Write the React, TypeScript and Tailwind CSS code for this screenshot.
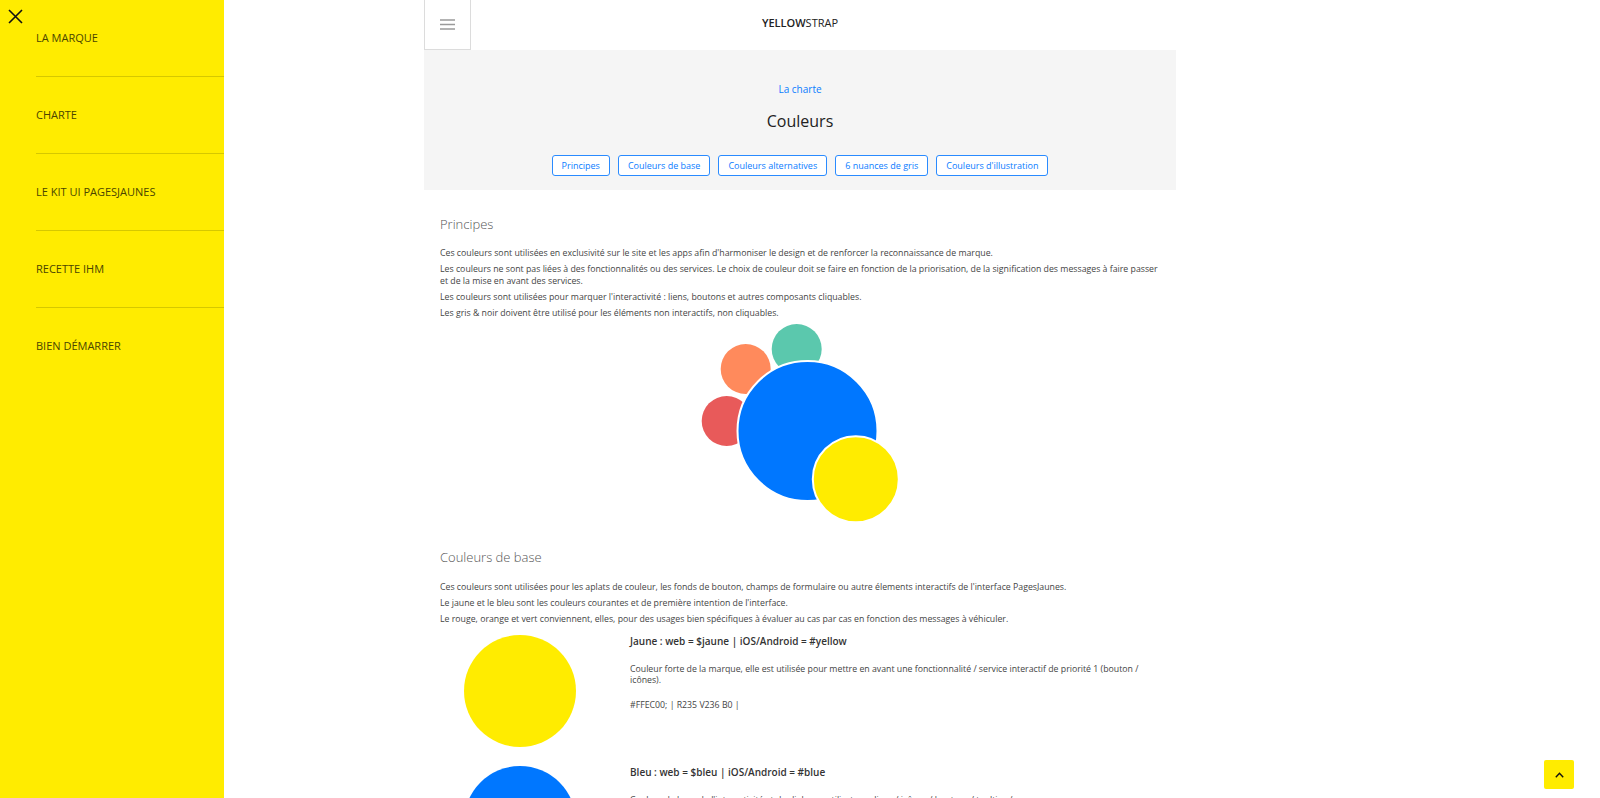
import React from 'react';

const menu = ['LA MARQUE', 'CHARTE', 'LE KIT UI PAGESJAUNES', 'RECETTE IHM', 'BIEN DÉMARRER'];

const anchors = ['Principes', 'Couleurs de base', 'Couleurs alternatives', '6 nuances de gris', "Couleurs d'illustration"];

const baseColors = [
    {
        fill: 'bg-[#ffec00]',
        title: 'Jaune : web = $jaune | iOS/Android = #yellow',
        desc: 'Couleur forte de la marque, elle est utilisée pour mettre en avant une fonctionnalité / service interactif de priorité 1 (bouton / icônes).',
        code: '#FFEC00; | R235 V236 B0 |',
    },
    {
        fill: 'bg-[#0077ff]',
        title: 'Bleu : web = $bleu | iOS/Android = #blue',
        desc: "Couleur de base de l'interactivité et du dialogue utilisateur : liens / icônes / boutons / tooltips /",
        code: '#0077FF; | R0 V119 B255 |',
    },
    {
        fill: 'bg-[#e85a5a]',
        title: 'Rouge : web = $rouge | iOS/Android = #red',
        desc: "Utilisée pour les messages d'erreur et les alertes.",
        code: '#E85A5A; | R232 V90 B90 |',
    },
];

const Sidebar = () => (
    <aside className="fixed left-0 top-0 h-screen w-[224px] bg-[#ffec00]">
        <button className="absolute left-[8px] top-[9px] h-[15px] w-[15px]">
            <svg viewBox="0 0 15 15" className="h-[15px] w-[15px]">
                <path d="M1 1 L14 14 M14 1 L1 14" stroke="#111" strokeWidth="1.6" fill="none" />
            </svg>
        </button>
        <nav className="pl-[36px]">
            {menu.map((item, i) => (
                <div
                    key={item}
                    className={`flex h-[77px] items-center text-[11px] text-[#4a4500] ${i < menu.length - 1 ? 'border-b border-[#d6c800]' : ''}`}
                >
                    {item}
                </div>
            ))}
        </nav>
    </aside>
);

const Bubbles = () => (
    <div className="flex justify-center">
        <svg width="240" height="206" viewBox="0 0 240 206">
            <circle cx="116.7" cy="29" r="25" fill="#5bc8ad" />
            <circle cx="65.7" cy="49" r="25" fill="#ff8a5c" />
            <circle cx="46.7" cy="101" r="25" fill="#e85a5a" />
            <circle cx="127.5" cy="111" r="70" fill="#0077ff" stroke="#fff" strokeWidth="2" />
            <circle cx="175.8" cy="159.2" r="43" fill="#ffec00" stroke="#fff" strokeWidth="2" />
        </svg>
    </div>
);

export default function App() {
    return (
        <div className="min-h-screen bg-white font-['Open_Sans',sans-serif] text-[#333]">
            <Sidebar />

            <div className="mx-auto w-[752px]">
                <header className="grid h-[50px] grid-cols-[47px_1fr_47px] items-start">
                    <button className="flex h-[50px] w-[47px] items-center justify-center border-x border-b border-[#dcdcdc] bg-white">
                        <svg width="15" height="11" viewBox="0 0 15 11">
                            <path d="M0 1 H15 M0 5.5 H15 M0 10 H15" stroke="#9a9a9a" strokeWidth="1.3" />
                        </svg>
                    </button>
                    <div className="flex h-[46px] items-center justify-center text-[11px] text-[#222]">
                        <span className="font-semibold">YELLOW</span>
                        <span>STRAP</span>
                    </div>
                    <div />
                </header>

                <div className="flex h-[140px] flex-col items-center bg-[#f5f5f5] pt-[32px]">
                    <a className="text-[10px] leading-[14px] text-[#0a7cff]">La charte</a>
                    <h1 className="mt-[14px] text-[16px] leading-[22px] text-[#222]">Couleurs</h1>
                    <div className="mt-[23px] flex gap-[8px]">
                        {anchors.map((a) => (
                            <a
                                key={a}
                                className="flex h-[21px] items-center rounded-[3px] border border-[#2a8bff] bg-white px-[9px] text-[9px] text-[#0a7cff]"
                            >
                                {a}
                            </a>
                        ))}
                    </div>
                </div>

                <main className="px-[16px]">
                    <section className="pt-[25px]">
                        <h2 className="text-[13px] font-light leading-[18px] text-[#555]">Principes</h2>
                        <div className="mt-[15px] space-y-[5.2px] text-[8.75px] leading-[11.2px] text-[#444]">
                            <p>Ces couleurs sont utilisées en exclusivité sur le site et les apps afin d'harmoniser le design et de renforcer la reconnaissance de marque.</p>
                            <p>Les couleurs ne sont pas liées à des fonctionnalités ou des services. Le choix de couleur doit se faire en fonction de la priorisation, de la signification des messages à faire passer et de la mise en avant des services.</p>
                            <p>Les couleurs sont utilisées pour marquer l'interactivité : liens, boutons et autres composants cliquables.</p>
                            <p>Les gris &amp; noir doivent être utilisé pour les éléments non interactifs, non cliquables.</p>
                        </div>
                        <Bubbles />
                    </section>

                    <section className="pt-[22px]">
                        <h2 className="text-[13px] font-light leading-[18px] text-[#555]">Couleurs de base</h2>
                        <div className="mt-[16px] space-y-[5.2px] text-[8.75px] leading-[11.2px] text-[#444]">
                            <p>Ces couleurs sont utilisées pour les aplats de couleur, les fonds de bouton, champs de formulaire ou autre élements interactifs de l'interface PagesJaunes.</p>
                            <p>Le jaune et le bleu sont les couleurs courantes et de première intention de l'interface.</p>
                            <p>Le rouge, orange et vert conviennent, elles, pour des usages bien spécifiques à évaluer au cas par cas en fonction des messages à véhiculer.</p>
                        </div>

                        <div className="mt-[8px] flex flex-col gap-[18px]">
                            {baseColors.map((c) => (
                                <div key={c.title} className="flex items-start">
                                    <div className="flex w-[160px] shrink-0 justify-center pt-[1px]">
                                        <div className={`h-[112px] w-[112px] rounded-full ${c.fill}`} />
                                    </div>
                                    <div className="ml-[30px] flex-1">
                                        <h3 className="text-[10px] font-semibold leading-[14px] text-[#333]">{c.title}</h3>
                                        <p className="mt-[16px] text-[8.75px] leading-[11.2px] text-[#444]">{c.desc}</p>
                                        <p className="mt-[14px] text-[8.75px] leading-[11.2px] text-[#444]">{c.code}</p>
                                    </div>
                                </div>
                            ))}
                        </div>
                    </section>
                </main>
            </div>

            <button className="fixed bottom-[9px] right-[26px] flex h-[29px] w-[30px] items-center justify-center rounded-[2px] bg-[#ffec00]">
                <svg width="9" height="6" viewBox="0 0 9 6">
                    <path d="M0.8 5.2 L4.5 1.3 L8.2 5.2" stroke="#111" strokeWidth="1.4" fill="none" />
                </svg>
            </button>
        </div>
    );
}
